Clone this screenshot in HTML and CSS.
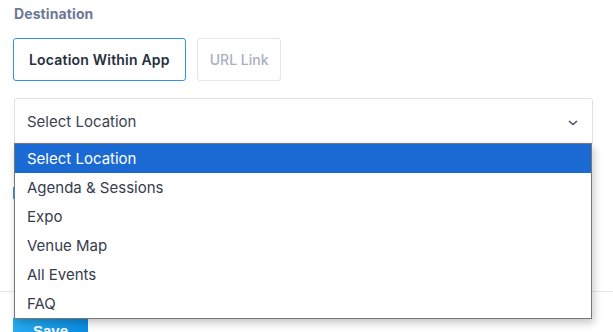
FILE: index.html
```html
<!DOCTYPE html>
<html lang="en">
<head>
    <meta charset="UTF-8">
    <meta name="viewport" content="width=device-width, initial-scale=1.0">
    <title>Destination</title>
    <link rel="stylesheet" href="styles.css">
</head>
<body>
    <div class="form">
        <div class="field-label">Destination</div>
        <div class="tabs">
            <button class="tab active">Location Within App</button>
            <button class="tab">URL Link</button>
        </div>
        <div class="select-wrap">
            <div class="select">
                <span>Select Location</span>
                <svg class="chevron" width="10" height="6" viewBox="0 0 10 6">
                    <path d="M1 1l4 3.5L9 1" fill="none" stroke="#4a5468" stroke-width="1.6"/>
                </svg>
            </div>
            <ul class="dropdown">
                <li class="selected">Select Location</li>
                <li>Agenda &amp; Sessions</li>
                <li>Expo</li>
                <li>Venue Map</li>
                <li>All Events</li>
                <li>FAQ</li>
            </ul>
        </div>
        <div class="check-row">
            <span class="checkbox"></span>
        </div>
    </div>
    <div class="footer">
        <button class="save-btn">Save</button>
    </div>
</body>
</html>
```

FILE: styles.css
```css
body {
    margin: 0;
    font-family: Inter, "Noto Sans", sans-serif;
    background-color: #fff;
    overflow: hidden;
}
.form {
    padding: 5px 20px 0 14px;
}
.field-label {
    font-size: 14px;
    font-weight: 700;
    color: #6d7894;
    line-height: 17px;
    letter-spacing: 0.1px;
}
.tabs {
    display: flex;
    gap: 11px;
    margin-top: 16px;
}
.tab {
    height: 43px;
    padding: 0 12px;
    font-family: inherit;
    font-size: 14px;
    font-weight: 500;
    color: #a8afbf;
    background-color: #fff;
    border: 1px solid #e6e6e6;
    border-radius: 3px;
}
.tab.active {
    padding: 0 15px;
    color: #262f40;
    font-weight: 600;
    letter-spacing: 0.2px;
    border-color: #3393e8;
    margin-left: -1px;
}
.select-wrap {
    position: relative;
    margin-top: 17px;
}
.select {
    height: 45px;
    display: flex;
    align-items: center;
    justify-content: space-between;
    padding: 0 14px 0 12px;
    border: 1px solid #e1e1e1;
    border-radius: 3px;
    font-size: 15px;
    color: #3c4352;
}
.chevron {
    margin-top: 2px;
}
.dropdown {
    position: absolute;
    top: 45px;
    left: 0;
    right: 1px;
    margin: 0;
    padding: 0;
    list-style: none;
    background-color: #fff;
    border: 1px solid #777;
    box-shadow: 2px 4px 8px rgba(0, 0, 0, 0.22);
    z-index: 2;
}
.dropdown li {
    height: 29px;
    line-height: 29px;
    padding-left: 12px;
    font-size: 15px;
    color: #353c4c;
}
.dropdown li.selected {
    background-color: #1b69d3;
    color: #fff;
}
.check-row {
    display: flex;
    align-items: center;
    margin-top: 41px;
    margin-left: -1px;
}
.checkbox {
    width: 12px;
    height: 12px;
    border: 1px solid #2b8fe6;
    border-radius: 2px;
}
.footer {
    margin-top: 91px;
    border-top: 1px solid #e8e8e8;
    padding: 25px 13px 0;
}
.save-btn {
    width: 75px;
    height: 34px;
    border: none;
    border-radius: 2px;
    background: linear-gradient(90deg, #26acf2, #0a8ce0);
    color: #fff;
    font-family: "Liberation Sans", Arial, sans-serif;
    font-size: 15px;
    font-weight: 700;
    padding-top: 0;
    padding-bottom: 8px;
}
```
